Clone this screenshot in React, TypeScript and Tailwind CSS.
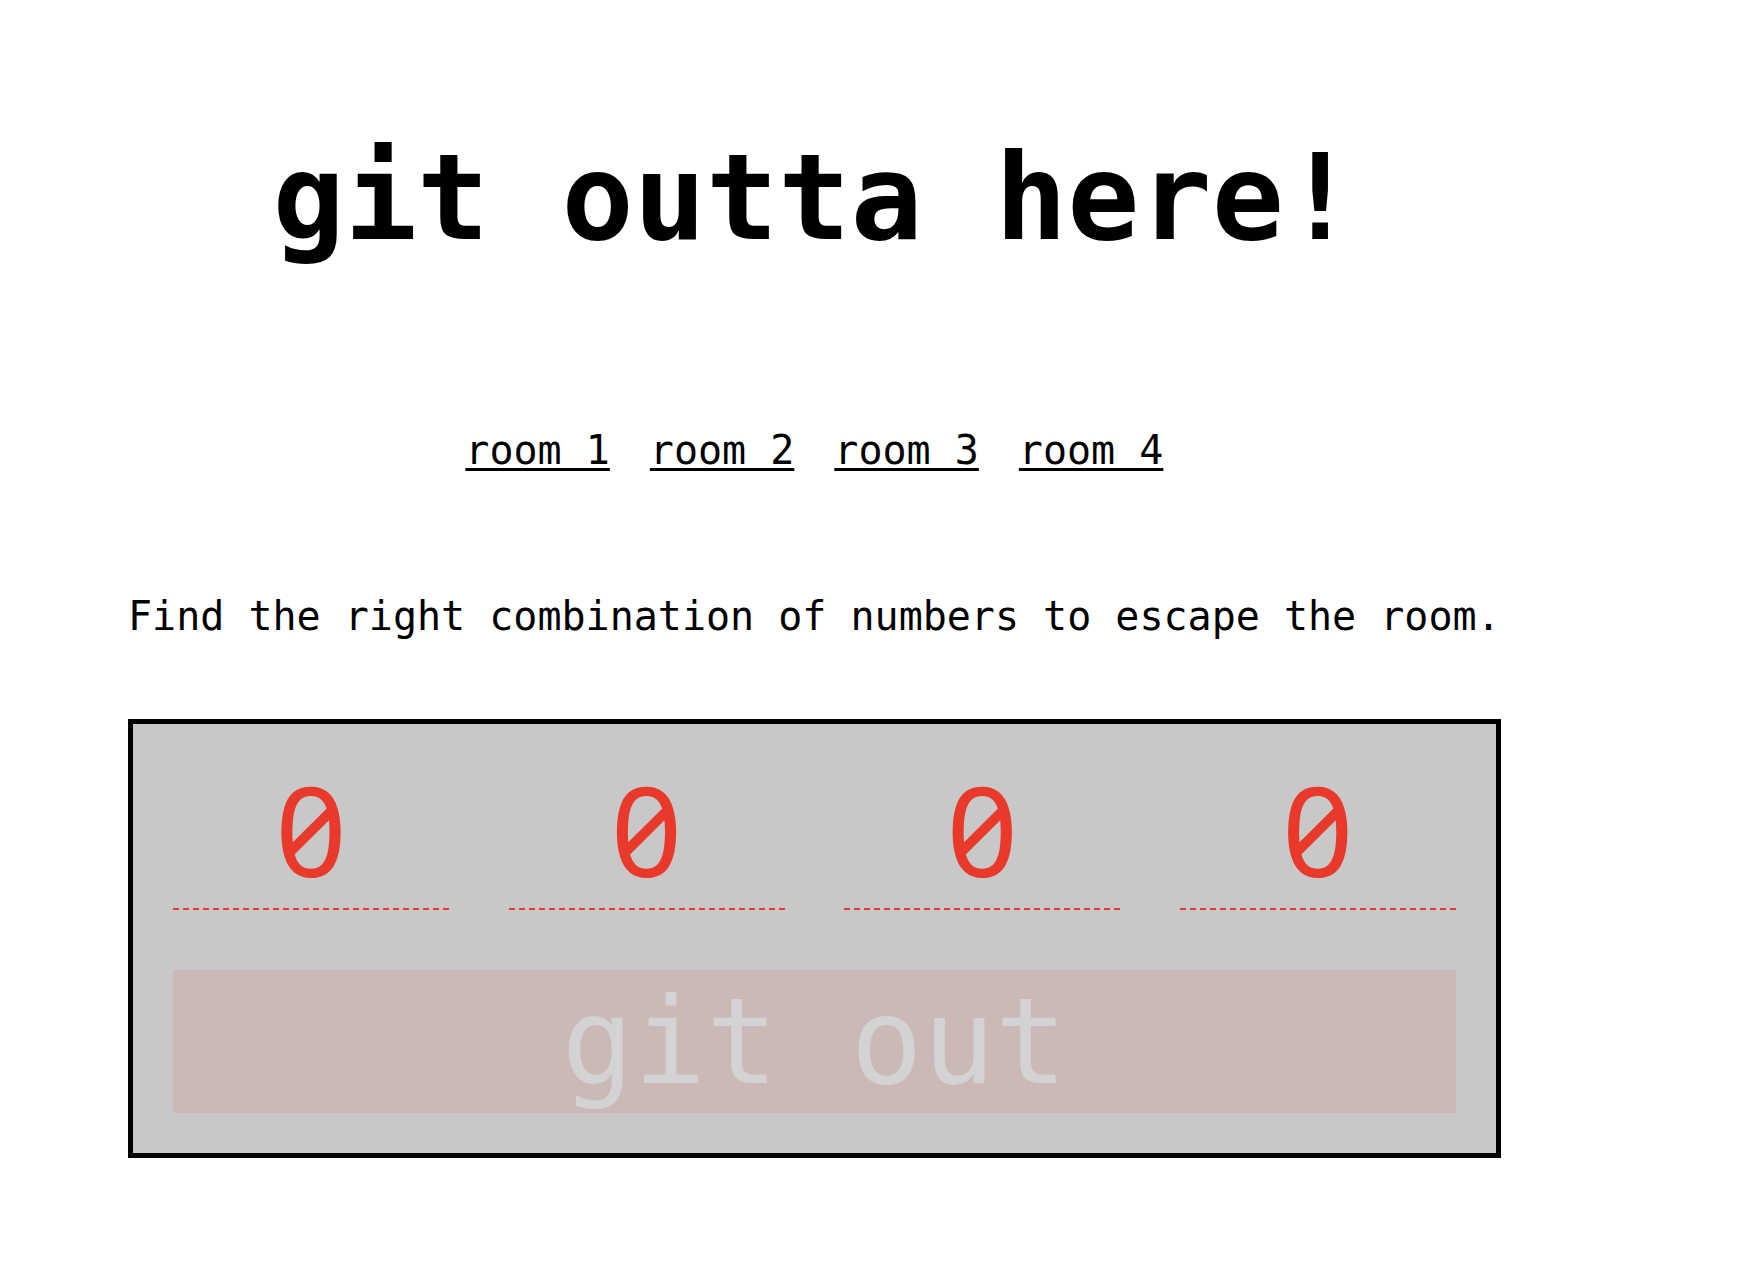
import * as React from 'react';

const rooms = ['room 1', 'room 2', 'room 3', 'room 4'];

export default function App() {
    const [digits, setDigits] = React.useState(['0', '0', '0', '0']);

    return (
        <div className="min-h-screen bg-white font-['DejaVu_Sans_Mono',monospace] text-black">
            <div className="ml-[128px] w-fit pt-[128px]">
                <h1 className="text-center text-[120px] font-bold leading-[140px]">git outta here!</h1>
                <nav className="mt-[159px] flex justify-center gap-[40px] text-[40px] leading-[47px]">
                    {rooms.map((room) => (
                        <a key={room} href="#" className="underline decoration-[3px] underline-offset-4">
                            {room}
                        </a>
                    ))}
                </nav>
                <p className="mt-[119px] text-[40px] leading-[47px]">
                    Find the right combination of numbers to escape the room.
                </p>
                <div className="mt-[79px] border-[5px] border-black bg-[#c8c8c8] px-[40px] pt-[45px] pb-[40px]">
                    <div className="flex justify-between">
                        {digits.map((d, i) => (
                            <input
                                key={i}
                                value={d}
                                onChange={(e) => {
                                    const next = [...digits];
                                    next[i] = e.target.value.slice(-1);
                                    setDigits(next);
                                }}
                                className="h-[141px] w-[276px] border-b-2 border-dashed border-[#e8392a] bg-transparent pt-0 pb-[20px] text-center font-['Noto_Sans',sans-serif] text-[125px] leading-[119px] text-[#e8392a] outline-none [font-feature-settings:'zero']"
                            />
                        ))}
                    </div>
                    <button className="mt-[60px] block h-[143px] w-full bg-[#cbb9b8] text-[120px] leading-[140px] text-[#d3d3d3]">
                        git out
                    </button>
                </div>
            </div>
        </div>
    );
}
